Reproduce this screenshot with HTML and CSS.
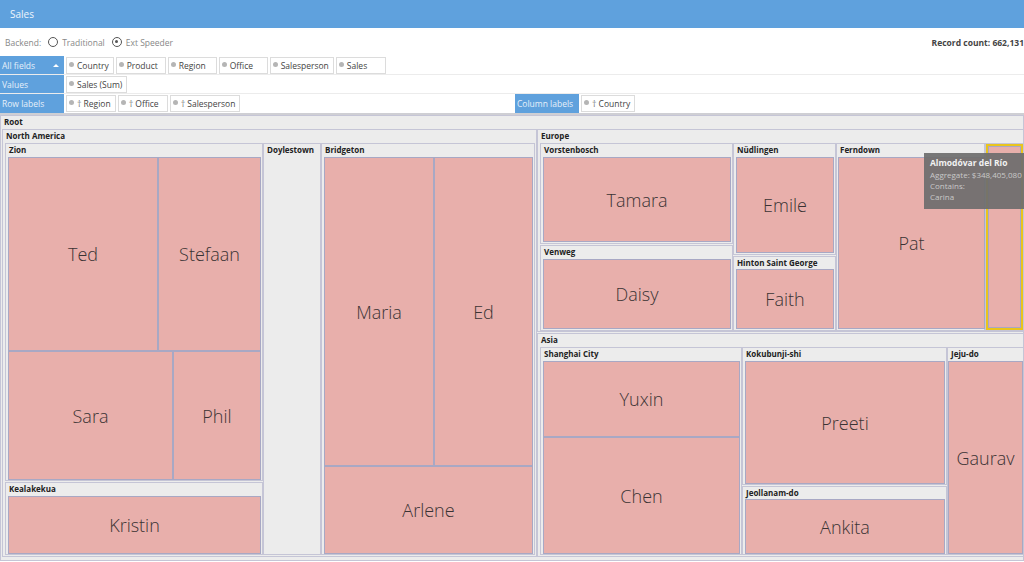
FILE: index.html
```html
<!DOCTYPE html>
<html>
<head>
<meta charset="utf-8">
<link rel="stylesheet" href="styles.css">
</head>
<body>
<div class="titlebar">Sales</div>
<div class="toolbar">
  <div class="backend">
    <span>Backend:</span>
    <span class="radio"></span><span>Traditional</span>
    <span class="radio on"></span><span>Ext Speeder</span>
  </div>
  <div class="count">Record count: 662,131</div>
</div>
<div class="fields">
  <div class="frow">
    <div class="flabel">All fields <span class="caret"></span></div>
    <div class="chips">
      <span class="chip"><i class="dot"></i>Country</span>
      <span class="chip w50"><i class="dot"></i>Product</span>
      <span class="chip w49"><i class="dot"></i>Region</span>
      <span class="chip w49"><i class="dot"></i>Office</span>
      <span class="chip"><i class="dot"></i>Salesperson</span>
      <span class="chip w50"><i class="dot"></i>Sales</span>
    </div>
  </div>
  <div class="frow">
    <div class="flabel">Values</div>
    <div class="chips">
      <span class="chip"><i class="dot"></i>Sales (Sum)</span>
    </div>
  </div>
  <div class="frow last">
    <div class="flabel">Row labels</div>
    <div class="chips grow">
      <span class="chip"><i class="dot"></i><b class="arr">&#8224;</b>Region</span>
      <span class="chip w50"><i class="dot"></i><b class="arr">&#8224;</b>Office</span>
      <span class="chip"><i class="dot"></i><b class="arr">&#8224;</b>Salesperson</span>
    </div>
    <div class="flabel">Column labels</div>
    <div class="chips grow">
      <span class="chip"><i class="dot"></i><b class="arr">&#8224;</b>Country</span>
    </div>
  </div>
</div>
<div class="treemap">
  <div class="grp" style="left:0;top:0;width:1024px;height:446px"><span class="gl">Root</span></div>
  <div class="grp" style="left:2px;top:14px;width:535px;height:428px"><span class="gl">North America</span></div>
  <div class="grp" style="left:5px;top:28px;width:258px;height:338px"><span class="gl">Zion</span></div>
  <div class="leaf" style="left:8px;top:42px;width:150px;height:194px">Ted</div>
  <div class="leaf" style="left:158px;top:42px;width:103px;height:194px">Stefaan</div>
  <div class="leaf" style="left:8px;top:236px;width:165px;height:129px">Sara</div>
  <div class="leaf" style="left:173px;top:236px;width:88px;height:129px">Phil</div>
  <div class="grp" style="left:5px;top:367px;width:258px;height:73px"><span class="gl">Kealakekua</span></div>
  <div class="leaf" style="left:8px;top:381px;width:253px;height:58px">Kristin</div>
  <div class="grp" style="left:263px;top:28px;width:58px;height:412px"><span class="gl">Doylestown</span></div>
  <div class="grp" style="left:321px;top:28px;width:214px;height:412px"><span class="gl">Bridgeton</span></div>
  <div class="leaf" style="left:324px;top:42px;width:110px;height:309px">Maria</div>
  <div class="leaf" style="left:434px;top:42px;width:99px;height:309px">Ed</div>
  <div class="leaf" style="left:324px;top:351px;width:209px;height:88px">Arlene</div>

  <div class="grp" style="left:537px;top:14px;width:487px;height:203px"><span class="gl">Europe</span></div>
  <div class="grp" style="left:540px;top:28px;width:193px;height:101px"><span class="gl">Vorstenbosch</span></div>
  <div class="leaf" style="left:543px;top:42px;width:188px;height:85px">Tamara</div>
  <div class="grp" style="left:540px;top:130px;width:193px;height:86px"><span class="gl">Venweg</span></div>
  <div class="leaf" style="left:543px;top:144px;width:188px;height:70px">Daisy</div>
  <div class="grp" style="left:733px;top:28px;width:103px;height:112px"><span class="gl">Nüdlingen</span></div>
  <div class="leaf" style="left:736px;top:42px;width:98px;height:96px">Emile</div>
  <div class="grp" style="left:733px;top:141px;width:103px;height:75px"><span class="gl">Hinton Saint George</span></div>
  <div class="leaf" style="left:736px;top:154px;width:98px;height:60px">Faith</div>
  <div class="grp" style="left:836px;top:28px;width:149px;height:188px"><span class="gl">Ferndown</span></div>
  <div class="leaf" style="left:838px;top:42px;width:147px;height:172px">Pat</div>
  <div class="grp" style="left:985px;top:28px;width:39px;height:188px"></div>
  <div class="leaf hi" style="left:986px;top:29px;width:37px;height:186px"></div>

  <div class="grp" style="left:537px;top:218px;width:487px;height:224px"><span class="gl">Asia</span></div>
  <div class="grp" style="left:540px;top:232px;width:202px;height:208px"><span class="gl">Shanghai City</span></div>
  <div class="leaf" style="left:543px;top:246px;width:197px;height:76px">Yuxin</div>
  <div class="leaf" style="left:543px;top:322px;width:197px;height:117px">Chen</div>
  <div class="grp" style="left:742px;top:232px;width:205px;height:138px"><span class="gl">Kokubunji-shi</span></div>
  <div class="leaf" style="left:745px;top:246px;width:200px;height:123px">Preeti</div>
  <div class="grp" style="left:742px;top:371px;width:205px;height:69px"><span class="gl">Jeollanam-do</span></div>
  <div class="leaf" style="left:745px;top:384px;width:200px;height:55px">Ankita</div>
  <div class="grp" style="left:947px;top:232px;width:77px;height:208px"><span class="gl">Jeju-do</span></div>
  <div class="leaf" style="left:948px;top:246px;width:75px;height:193px">Gaurav</div>

  <div class="tooltip">
    <div class="tt-title">Almodóvar del Río</div>
    <div>Aggregate: $348,405,080</div>
    <div>Contains:</div>
    <div>Carina</div>
  </div>
</div>
</body>
</html>
```
FILE: styles.css
```css
* { box-sizing: border-box; }
html, body { margin: 0; padding: 0; }
body {
  width: 1024px;
  height: 562px;
  overflow: hidden;
  font-family: "Open Sans", "Liberation Sans", sans-serif;
  background: #fff;
  color: #333;
}
.titlebar {
  height: 28px;
  background: #5fa1dd;
  color: #eef5fc;
  font-size: 10px;
  line-height: 28px;
  padding-left: 10px;
}
.toolbar {
  display: flex;
  justify-content: space-between;
  align-items: center;
  height: 28px;
  padding: 0 0 0 5px;
}
.backend {
  display: flex;
  align-items: center;
  gap: 4px;
  font-size: 8.5px;
  color: #888;
}
.radio {
  display: inline-block;
  width: 10px;
  height: 10px;
  border: 1.4px solid #555;
  border-radius: 50%;
  margin-left: 3px;
  position: relative;
}
.radio.on::after {
  content: "";
  position: absolute;
  left: 2px;
  top: 2px;
  width: 3.2px;
  height: 3.2px;
  border-radius: 50%;
  background: #555;
}
.count {
  font-size: 8.5px;
  font-weight: bold;
  color: #444;
  padding-top: 1px;
}
.fields {
  border-bottom: 2px solid #cfcfd4;
}
.frow {
  display: flex;
  height: 19px;
  border-bottom: 1px solid #ececec;
}
.frow.last { border-bottom: none; }
.flabel {
  width: 64px;
  flex: none;
  background: #5fa1dd;
  color: #e6f0fa;
  font-size: 8.5px;
  line-height: 19px;
  padding-left: 2px;
  position: relative;
}
.caret {
  position: absolute;
  right: 5px;
  top: 8px;
  width: 0;
  height: 0;
  border-left: 3px solid transparent;
  border-right: 3px solid transparent;
  border-bottom: 3px solid #fff;
}
.chips {
  display: flex;
  gap: 2px;
  padding: 1px 2px;
  align-items: stretch;
}
.chips.grow { width: 451px; flex: none; }
.chips.grow:last-child { flex: 1; }
.chip {
  display: flex;
  align-items: center;
  border: 1px solid #dcdcdc;
  background: #fff;
  font-size: 8.5px;
  color: #444;
  padding: 0 4px 0 2px;
  height: 17px;
  white-space: nowrap;
}
.chip.w50 { width: 50px; }
.chip.w49 { width: 49px; }
.dot {
  display: inline-block;
  width: 5px;
  height: 5px;
  border-radius: 50%;
  background: #b5b5b5;
  margin-right: 3px;
  margin-top: -2px;
}
.arr {
  font-weight: normal;
  color: #777;
  margin-right: 2px;
  font-size: 9px;
}
.treemap {
  position: relative;
  height: 448px;
}
.grp {
  position: absolute;
  background: #ececec;
  border: 1px solid #c5c5d6;
  overflow: hidden;
}
.gl {
  display: block;
  font-size: 8px;
  font-weight: bold;
  color: #222;
  line-height: 12px;
  padding-left: 3px;
  white-space: nowrap;
}
.leaf {
  position: absolute;
  background: #e8afab;
  border: 1px solid #a8a8c4;
  display: flex;
  align-items: center;
  justify-content: center;
  font-size: 18px;
  font-weight: 300;
  color: #3a3334;
  overflow: hidden;
}
.leaf.hi {
  border: 2px solid #e9c41c;
  box-shadow: inset 0 0 0 1px #a8a8c4;
}
.tooltip {
  position: absolute;
  left: 924px;
  top: 38px;
  width: 100px;
  height: 56px;
  background: rgba(110, 110, 110, 0.93);
  color: #c9c9c9;
  font-size: 8px;
  line-height: 11px;
  padding: 4px 6px;
  white-space: nowrap;
  overflow: hidden;
}
.tt-title {
  color: #f2f2f2;
  font-weight: bold;
  font-size: 8.5px;
  line-height: 12px;
}
```
